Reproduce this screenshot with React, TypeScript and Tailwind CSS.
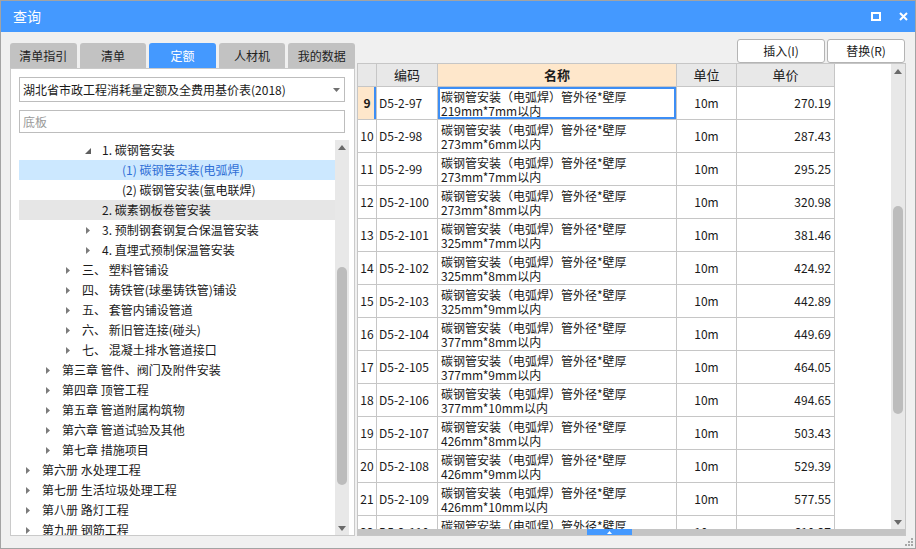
import clsx from "clsx";

type TreeNode = {
  level: number;
  label: string;
  arrow?: "open" | "closed";
  state?: "selected" | "hover";
};

const tree: TreeNode[] = [
  { level: 3, arrow: "open", label: "1. 碳钢管安装" },
  { level: 4, label: "(1) 碳钢管安装(电弧焊)", state: "selected" },
  { level: 4, label: "(2) 碳钢管安装(氩电联焊)" },
  { level: 3, label: "2. 碳素钢板卷管安装", state: "hover" },
  { level: 3, arrow: "closed", label: "3. 预制钢套钢复合保温管安装" },
  { level: 3, arrow: "closed", label: "4. 直埋式预制保温管安装" },
  { level: 2, arrow: "closed", label: "三、 塑料管铺设" },
  { level: 2, arrow: "closed", label: "四、 铸铁管(球墨铸铁管)铺设" },
  { level: 2, arrow: "closed", label: "五、 套管内铺设管道" },
  { level: 2, arrow: "closed", label: "六、 新旧管连接(碰头)" },
  { level: 2, arrow: "closed", label: "七、 混凝土排水管道接口" },
  { level: 1, arrow: "closed", label: "第三章 管件、阀门及附件安装" },
  { level: 1, arrow: "closed", label: "第四章 顶管工程" },
  { level: 1, arrow: "closed", label: "第五章 管道附属构筑物" },
  { level: 1, arrow: "closed", label: "第六章 管道试验及其他" },
  { level: 1, arrow: "closed", label: "第七章 措施项目" },
  { level: 0, arrow: "closed", label: "第六册 水处理工程" },
  { level: 0, arrow: "closed", label: "第七册 生活垃圾处理工程" },
  { level: 0, arrow: "closed", label: "第八册 路灯工程" },
  { level: 0, arrow: "closed", label: "第九册 钢筋工程" },
];

const indent = ["pl-[4px]", "pl-[24px]", "pl-[44px]", "pl-[64px]", "pl-[84px]"];

const rows = [
  { no: 9, code: "D5-2-97", spec: "219mm*7mm以内", price: "270.19" },
  { no: 10, code: "D5-2-98", spec: "273mm*6mm以内", price: "287.43" },
  { no: 11, code: "D5-2-99", spec: "273mm*7mm以内", price: "295.25" },
  { no: 12, code: "D5-2-100", spec: "273mm*8mm以内", price: "320.98" },
  { no: 13, code: "D5-2-101", spec: "325mm*7mm以内", price: "381.46" },
  { no: 14, code: "D5-2-102", spec: "325mm*8mm以内", price: "424.92" },
  { no: 15, code: "D5-2-103", spec: "325mm*9mm以内", price: "442.89" },
  { no: 16, code: "D5-2-104", spec: "377mm*8mm以内", price: "449.69" },
  { no: 17, code: "D5-2-105", spec: "377mm*9mm以内", price: "464.05" },
  { no: 18, code: "D5-2-106", spec: "377mm*10mm以内", price: "494.65" },
  { no: 19, code: "D5-2-107", spec: "426mm*8mm以内", price: "503.43" },
  { no: 20, code: "D5-2-108", spec: "426mm*9mm以内", price: "529.39" },
  { no: 21, code: "D5-2-109", spec: "426mm*10mm以内", price: "577.55" },
  { no: 22, code: "D5-2-110", spec: "480mm*7mm以内", price: "610.27" },
];

const tabs = ["清单指引", "清单", "定额", "人材机", "我的数据"];

const Up = () => (
  <svg width="8" height="5" viewBox="0 0 8 5">
    <polygon points="0,5 4,0 8,5" fill="#6a6a6a" />
  </svg>
);

const Down = () => (
  <svg width="8" height="5" viewBox="0 0 8 5">
    <polygon points="0,0 8,0 4,5" fill="#6a6a6a" />
  </svg>
);

const ScrollBar = ({ offset, size }: { offset: string; size: string }) => (
  <div className="flex w-[14px] shrink-0 flex-col items-center bg-[#e8e8e8]">
    <div className="flex h-[14px] items-center justify-center">
      <Up />
    </div>
    <div className="flex-1">
      <div className={clsx("w-[10px] rounded-full bg-[#bcbcbc]", offset, size)} />
    </div>
    <div className="flex h-[14px] items-center justify-center">
      <Down />
    </div>
  </div>
);

export default function App() {
  return (
    <div className="relative flex h-[549px] w-[916px] flex-col overflow-hidden border border-[#a3a3a3] bg-[#f0f0f0] font-[Noto_Sans_CJK_SC,sans-serif] text-[#1a1a1a]">
      {/* title bar */}
      <div className="flex h-[31px] shrink-0 items-center bg-[#4499ff] pl-[12px] pr-[7px] text-white">
        <span className="text-[14px]">查询</span>
        <div className="ml-auto flex items-center gap-[18px]">
          <svg width="10" height="9" viewBox="0 0 10 9">
            <rect x="1" y="1" width="8" height="7" fill="none" stroke="white" strokeWidth="2" />
          </svg>
          <svg width="9" height="9" viewBox="0 0 9 9">
            <path d="M1 1 L8 8 M8 1 L1 8" stroke="white" strokeWidth="2" />
          </svg>
        </div>
      </div>

      <div className="flex min-h-0 flex-1 pb-[12px] pl-[9px] pr-[9px]">
        {/* left column */}
        <div className="flex w-[345px] shrink-0 flex-col pt-[11px]">
          <div className="flex h-[25px] gap-[3px]">
            {tabs.map((t) => (
              <div
                key={t}
                className={clsx(
                  "flex w-[77px] items-center justify-center rounded-t-[3px] text-[12px]",
                  t === "定额" ? "bg-[#4499ff] text-white" : "bg-[#c2c2c2] text-[#222]"
                )}
              >
                {t}
              </div>
            ))}
          </div>

          <div className="flex min-h-0 flex-1 flex-col border border-[#cacaca] bg-white pl-[8px] pr-[5px] pt-[8px]">
            <div className="mr-[4px] flex h-[25px] shrink-0 items-center border border-[#bdbdbd] pl-[3px] pr-[4px] text-[12px]">
              <span className="truncate">湖北省市政工程消耗量定额及全费用基价表(2018)</span>
              <svg className="ml-auto shrink-0" width="7" height="4" viewBox="0 0 7 4">
                <polygon points="0,0 7,0 3.5,4" fill="#707070" />
              </svg>
            </div>
            <div className="mr-[4px] mt-[8px] flex h-[23px] shrink-0 items-center border border-[#bdbdbd] pl-[3px] text-[12px] text-[#9a9a9a]">
              底板
            </div>

            <div className="mt-[7px] flex min-h-0 flex-1">
              <div className="min-w-0 flex-1 overflow-hidden">
                {tree.map((n) => (
                  <div
                    key={n.label}
                    className={clsx(
                      "flex h-[20px] items-center whitespace-nowrap text-[12px]",
                      indent[n.level],
                      n.state === "selected" && "bg-[#cce8ff] text-[#2f6fd6]",
                      n.state === "hover" && "bg-[#e6e6e6]"
                    )}
                  >
                    <div className="flex w-[10px] justify-center">
                      {n.arrow === "closed" && (
                        <svg width="4" height="7" viewBox="0 0 4 7">
                          <polygon points="0,0 4,3.5 0,7" fill="#7b7b7b" />
                        </svg>
                      )}
                      {n.arrow === "open" && (
                        <svg className="mt-[2px]" width="6" height="6" viewBox="0 0 6 6">
                          <polygon points="6,0 6,6 0,6" fill="#5e5e5e" />
                        </svg>
                      )}
                    </div>
                    <span className="ml-[9px]">{n.label}</span>
                  </div>
                ))}
              </div>
              <ScrollBar offset="mt-[113px]" size="h-[218px]" />
            </div>
          </div>
        </div>

        {/* right column */}
        <div className="ml-[2px] flex min-w-0 flex-1 flex-col">
          <div className="flex h-[31px] shrink-0 items-start justify-end gap-[2px] pr-[1px] pt-[7px]">
            <button className="h-[24px] w-[88px] rounded-[3px] border border-[#b4b4b4] bg-white text-[12px]">
              插入(I)
            </button>
            <button className="h-[24px] w-[78px] rounded-[3px] border border-[#b4b4b4] bg-white text-[12px]">
              替换(R)
            </button>
          </div>

          <div className="flex min-h-0 flex-1 flex-col border border-[#c6c6c6] bg-white">
            <div className="flex min-h-0 flex-1">
              <div className="min-w-0 flex-1 overflow-hidden">
                <div className="flex h-[23px] text-[13px]">
                  <div className="w-[19px] border-b border-r border-[#c6c6c6] bg-[#e8e8e8]" />
                  <div className="flex w-[61px] items-center justify-center border-b border-r border-[#c6c6c6] bg-[#e8e8e8]">
                    编码
                  </div>
                  <div className="flex w-[239px] items-center justify-center border-b border-r border-[#c6c6c6] bg-[#fee7cb] font-bold">
                    名称
                  </div>
                  <div className="flex w-[60px] items-center justify-center border-b border-r border-[#c6c6c6] bg-[#e8e8e8]">
                    单位
                  </div>
                  <div className="flex w-[98px] items-center justify-center border-b border-r border-[#c6c6c6] bg-[#e8e8e8]">
                    单价
                  </div>
                </div>

                {rows.map((r) => {
                  const sel = r.no === 9;
                  return (
                    <div key={r.no} className="flex h-[33px] text-[12px] leading-[14px]">
                      <div
                        className={clsx(
                          "flex w-[19px] items-center justify-center border-b border-r border-[#c6c6c6]",
                          sel && "bg-[#fee7cb] font-bold shadow-[inset_-2px_0_0_#3d8ef5]"
                        )}
                      >
                        {r.no}
                      </div>
                      <div className="flex w-[61px] items-center border-b border-r border-[#c6c6c6] pl-[2px]">
                        {r.code}
                      </div>
                      <div
                        className={clsx(
                          "w-[239px] border-b border-r border-[#c6c6c6] pl-[3px] pt-[3px]",
                          sel && "shadow-[inset_0_0_0_2px_#3d8ef5]"
                        )}
                      >
                        <div>碳钢管安装（电弧焊）管外径*壁厚</div>
                        <div>{r.spec}</div>
                      </div>
                      <div className="flex w-[60px] items-center justify-center border-b border-r border-[#c6c6c6]">
                        10m
                      </div>
                      <div className="flex w-[98px] items-center justify-end border-b border-r border-[#c6c6c6] pr-[3px]">
                        {r.price}
                      </div>
                    </div>
                  );
                })}
              </div>
              <ScrollBar offset="mt-[128px]" size="h-[208px]" />
            </div>
            <div className="flex h-[6px] shrink-0 bg-[#c4c4c4]">
              <div className="ml-[229px] flex w-[45px] items-center justify-center bg-[#4499ff]">
                <svg width="5" height="3" viewBox="0 0 5 3">
                  <polygon points="0,3 2.5,0 5,3" fill="white" />
                </svg>
              </div>
            </div>
          </div>
        </div>
      </div>

      {/* resize grip */}
      <svg className="absolute bottom-[2px] right-[2px]" width="8" height="8" viewBox="0 0 8 8">
        <rect x="6" y="0" width="2" height="2" fill="#a8a8a8" />
        <rect x="6" y="3" width="2" height="2" fill="#a8a8a8" />
        <rect x="3" y="3" width="2" height="2" fill="#a8a8a8" />
        <rect x="6" y="6" width="2" height="2" fill="#a8a8a8" />
        <rect x="3" y="6" width="2" height="2" fill="#a8a8a8" />
        <rect x="0" y="6" width="2" height="2" fill="#a8a8a8" />
      </svg>
    </div>
  );
}
